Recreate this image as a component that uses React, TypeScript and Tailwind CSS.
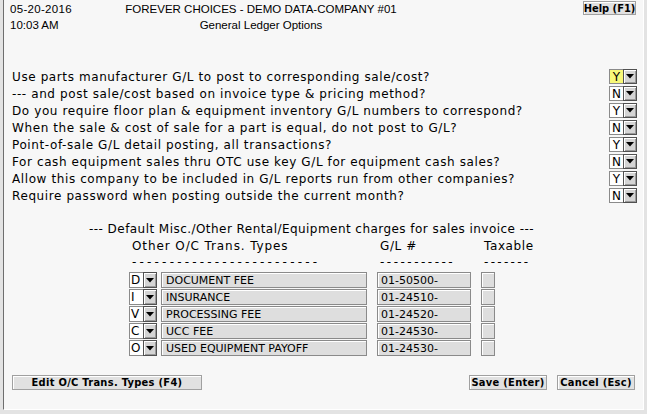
import React from "react";

const body = { fontFamily: '"DejaVu Sans", Verdana, sans-serif' };
const cond = { fontFamily: '"DejaVu Sans Condensed", "DejaVu Sans", Tahoma, sans-serif' };
const head = { fontFamily: '"Liberation Sans", Arial, sans-serif' };

function Arrow() {
  return (
    <div className="w-[14px] h-full bg-[#d4d4d4] border border-[#505050] shadow-[inset_1px_1px_0_#ffffff,inset_-1px_-1px_0_#9a9a9a] flex items-center justify-center">
      <svg width="8" height="5" viewBox="0 0 8 5">
        <polygon points="0,0 8,0 4,4.5" fill="#000" />
      </svg>
    </div>
  );
}

function YN({ v, hl }: { v: string; hl?: boolean }) {
  return (
    <div className="flex h-[15px]">
      <div
        className={`w-[14px] h-full border border-r-0 border-[#8a8a8a] flex items-center justify-center text-[12px] leading-none text-black ${
          hl ? "bg-[#f8f878]" : "bg-white"
        }`}
      >
        {v}
      </div>
      <Arrow />
    </div>
  );
}

const questions: [string, string, boolean?][] = [
  ["Use parts manufacturer G/L to post to corresponding sale/cost?", "Y", true],
  ["--- and post sale/cost based on invoice type & pricing method?", "N"],
  ["Do you require floor plan & equipment inventory G/L numbers to correspond?", "Y"],
  ["When the sale & cost of sale for a part is equal, do not post to G/L?", "N"],
  ["Point-of-sale G/L detail posting, all transactions?", "Y"],
  ["For cash equipment sales thru OTC use key G/L for equipment cash sales?", "N"],
  ["Allow this company to be included in G/L reports run from other companies?", "Y"],
  ["Require password when posting outside the current month?", "N"],
];

const rows: [string, string, string][] = [
  ["D", "DOCUMENT FEE", "01-50500-"],
  ["I", "INSURANCE", "01-24510-"],
  ["V", "PROCESSING FEE", "01-24520-"],
  ["C", "UCC FEE", "01-24530-"],
  ["O", "USED EQUIPMENT PAYOFF", "01-24530-"],
];

function Btn({ children, w }: { children: React.ReactNode; w: string }) {
  return (
    <div
      className={`${w} h-[15px] bg-[#e1e1e1] border border-[#a0a0a0] shadow-[inset_1px_1px_0_#ffffff] flex items-center justify-center text-[11px] font-bold leading-none text-black tracking-[0.3px] whitespace-nowrap`}
      style={cond}
    >
      {children}
    </div>
  );
}

export default function App() {
  return (
    <div className="w-[647px] h-[414px] bg-[#e3e3e3] overflow-hidden" style={body}>
      <div className="ml-[3px] w-[641px] h-[410px] bg-[#f7f7f7] border-l border-[#6e6e6e] border-r border-b border-r-[#ffffff] border-b-[#ffffff] flex flex-col text-black">
        {/* header */}
        <div className="flex pt-[1px] pl-[6px] pr-[6px] text-[11.5px]" style={head}>
          <div className="w-[100px] flex flex-col">
            <div className="h-[16px] leading-[16px] tracking-[0.3px]">05-20-2016</div>
            <div className="h-[16px] leading-[16px]">10:03 AM</div>
          </div>
          <div className="w-[302px] flex flex-col items-center">
            <div className="h-[16px] leading-[16px] whitespace-nowrap">
              FOREVER CHOICES - DEMO DATA-COMPANY #01
            </div>
            <div className="h-[16px] leading-[16px] whitespace-nowrap">General Ledger Options</div>
          </div>
          <div className="flex-1 flex justify-end pr-[1px]">
            <div
              className="w-[53px] h-[14px] bg-[#e1e1e1] border border-[#a0a0a0] shadow-[inset_1px_1px_0_#ffffff] flex items-center justify-center text-[11px] font-bold leading-none whitespace-nowrap"
              style={cond}
            >
              Help (F1)
            </div>
          </div>
        </div>

        {/* questions */}
        <div className="mt-[35px] pl-[8px] flex flex-col">
          {questions.map(([q, v, hl], i) => (
            <div key={i} className="h-[17px] flex items-center">
              <div className="w-[597px] text-[12px] leading-none whitespace-nowrap tracking-[0.6px]">{q}</div>
              <YN v={v} hl={hl} />
            </div>
          ))}
        </div>

        {/* table */}
        <div className="mt-[17px] flex flex-col text-[12px]">
          <div className="h-[17px] leading-[17px] pl-[85px] whitespace-nowrap tracking-[0.45px]">
            --- Default Misc./Other Rental/Equipment charges for sales invoice ---
          </div>
          <div className="h-[17px] leading-[17px] flex whitespace-nowrap">
            <div className="pl-[128px] w-[376px] tracking-[0.9px]">Other O/C Trans. Types</div>
            <div className="w-[104px] tracking-[0.6px]">G/L #</div>
            <div className="tracking-[0.6px]">Taxable</div>
          </div>
          <div className="h-[17px] leading-[15px] flex whitespace-nowrap">
            <div className="pl-[128px] w-[376px] tracking-[3.2px]">-------------------------</div>
            <div className="w-[104px] tracking-[2.5px]">-----------</div>
            <div className="tracking-[2.3px]">-------</div>
          </div>
          <div className="flex flex-col gap-[1px]">
            {rows.map(([c, d, g], i) => (
              <div key={i} className="h-[16px] flex">
                <div className="ml-[125px] flex h-full">
                  <div className="w-[14px] h-full bg-white border border-r-0 border-[#8a8a8a] flex items-center pl-[1px] text-[12px] leading-none">
                    {c}
                  </div>
                  <Arrow />
                </div>
                <div className="ml-[4px] w-[206px] h-full bg-[#dedede] border border-[#8a8a8a] shadow-[inset_1px_1px_0_#ffffff] flex items-center pl-[4px] text-[11px] leading-none whitespace-nowrap">
                  {d}
                </div>
                <div className="ml-[10px] w-[94px] h-full bg-[#dedede] border border-[#8a8a8a] shadow-[inset_1px_1px_0_#ffffff] flex items-center pl-[3px] text-[11px] leading-none">
                  {g}
                </div>
                <div className="ml-[10px] w-[14px] h-full bg-[#dedede] border border-[#8a8a8a] shadow-[inset_1px_1px_0_#ffffff]" />
              </div>
            ))}
          </div>
        </div>

        {/* buttons */}
        <div className="mt-auto mb-[19px] flex items-center pl-[8px] pr-[8px]">
          <Btn w="w-[190px]">Edit O/C Trans. Types (F4)</Btn>
          <div className="flex-1" />
          <Btn w="w-[78px]">Save (Enter)</Btn>
          <div className="w-[10px]" />
          <Btn w="w-[78px]">Cancel (Esc)</Btn>
        </div>
      </div>
    </div>
  );
}
